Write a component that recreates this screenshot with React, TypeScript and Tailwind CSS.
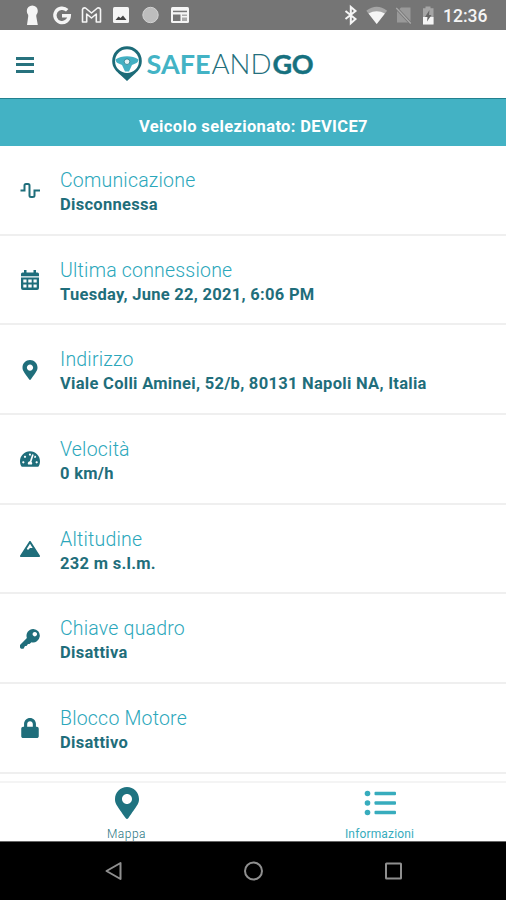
import type { ReactNode } from "react";
import {
    FaLock,
    FaMapMarkerAlt,
    FaMountain,
    FaTachometerAlt,
} from "react-icons/fa";

interface InfoItem {
    title: string;
    value: string;
    icon: ReactNode;
}

const SignalIcon = () => (
    <svg width="21" height="17" viewBox="0 0 21 17" fill="none" stroke="currentColor" strokeWidth="2">
        <path d="M0.500 8.500H4.500V3.500Q4.500 2 6 2H8Q9.500 2 9.500 3.500V13.500Q9.500 15 11 15H12.500Q14.500 15 14.500 13.500V8.500H20" />
    </svg>
);

const CalendarIcon = () => (
    <svg width="18" height="20" viewBox="0 0 18 20" fill="currentColor">
        <path d="M3 0h2.500v2.500h7V0H15v2.500h1.500Q18 2.500 18 4v2.200H0V4q0-1.500 1.500-1.500H3z" />
        <path
            fillRule="evenodd"
            d="M0 7.500h18V18q0 2-2 2H2q-2 0-2-2zM2.300 9.500v3h3.200v-3zm5 0v3h3.400v-3zm5.200 0v3h3.200v-3zM2.300 14.500v3h3.200v-3zm5 0v3h3.400v-3zm5.200 0v3h3.200v-3z"
        />
    </svg>
);

const KeyIcon = () => (
    <svg width="20" height="20" viewBox="0 0 20 20" fill="currentColor">
        <path
            fillRule="evenodd"
            d="M13.300 0a6.700 6.700 0 1 1-1.800 13.200L9.500 15H8L6.500 17H5L3.500 19.800H1L0 18.500V16L6.900 9A6.700 6.700 0 0 1 13.300 0zM14.800 3a2.200 2.200 0 1 0 .01 0z"
        />
    </svg>
);

const ListIcon = () => (
    <svg width="32" height="32" viewBox="0 0 32 32" fill="currentColor">
        <circle cx="3.500" cy="6.500" r="2.800" />
        <circle cx="3.500" cy="16" r="2.800" />
        <circle cx="3.500" cy="25.500" r="2.800" />
        <rect x="10.500" y="4.700" width="21.500" height="3.600" rx="1" />
        <rect x="10.500" y="14.200" width="21.500" height="3.600" rx="1" />
        <rect x="10.500" y="23.700" width="21.500" height="3.600" rx="1" />
    </svg>
);

const items: InfoItem[] = [
    { title: "Comunicazione", value: "Disconnessa", icon: <SignalIcon /> },
    { title: "Ultima connessione", value: "Tuesday, June 22, 2021, 6:06 PM", icon: <CalendarIcon /> },
    { title: "Indirizzo", value: "Viale Colli Aminei, 52/b, 80131 Napoli NA, Italia", icon: <FaMapMarkerAlt size={20} /> },
    { title: "Velocità", value: "0 km/h", icon: <FaTachometerAlt size={20} /> },
    { title: "Altitudine", value: "232 m s.l.m.", icon: <FaMountain size={20} /> },
    { title: "Chiave quadro", value: "Disattiva", icon: <KeyIcon /> },
    { title: "Blocco Motore", value: "Disattivo", icon: <FaLock size={20} /> },
];

function StatusBar() {
    return (
        <div className="flex h-[30px] shrink-0 items-center bg-[#757575] pr-[19px] pl-[26px] text-[#f5f5f5]">
            {/* Notifications */}
            <svg width="166" height="30" viewBox="26 0 166 30" fill="currentColor">
                <path d="M26.800 11a5.500 5.500 0 0 1 11 0q0 2.500-1.500 4v1.500L37.800 25H27l1.200-8.500V15Q26.800 13.500 26.800 11z" />
                <path d="M67.200 10.300A7.200 7.200 0 1 0 69.300 15.700H62" fill="none" stroke="currentColor" strokeWidth="3.400" />
                <path d="M82.500 22V9.500Q83 7.500 85.500 8L91.500 13l6-5q2.500-.5 3 1.500V22h-4.200v-8L91.500 18l-4.800-4v8z" fill="none" stroke="currentColor" strokeWidth="1.600" strokeLinejoin="round" />
                <rect x="113" y="7" width="16" height="16" rx="1.500" />
                <path d="M115.500 20l3-3.500 2 1.500 2.500-2.500 3.500 4.500z" fill="#444" />
                <circle cx="150.500" cy="15" r="7.700" fill="#bdbdbd" stroke="#d2d2d2" />
                <rect x="171" y="7" width="18" height="16" rx="1.500" />
                <path d="M173 10.700h14v1.500h-14z" fill="#777" />
                <path d="M173 14.500h7.500v6.500h-7.500z" fill="#757575" />
                <path d="M182 14.500h5v1.500h-5zM182 17.500h5v3.500h-5z" fill="#aaa" />
            </svg>
            <svg className="ml-auto" width="98" height="30" viewBox="342 0 98 30" fill="currentColor">
                <path d="M345.500 11l10 8-4.700 4.200V7l4.700 4-10 8" fill="none" stroke="currentColor" strokeWidth="2" />
                <path d="M366.300 10.700q10.400-8 20.800 0L376.700 24z" fill="#a5a5a5" />
                <path d="M368.500 13.500q8.200-4.500 16.400 0l-8.200 10.500z" />
                <path d="M401 7.500h9.500V22.500h-13.500V11.500z" fill="#999" />
                <path d="M396.300 8l14.500 15.500" stroke="#757575" strokeWidth="3" />
                <path d="M396.300 8l14.500 15.500" stroke="#aaa" strokeWidth="1.300" />
                <path d="M423 8.200h2.500V6.500h5v1.700h3v16H423z" fill="#a5a5a5" />
                <path d="M423 17h10.500v7.500H423z" />
                <path d="M429.500 10l-4.500 7h2.500l-.5 4.500 4.500-6.500H429z" fill="#666" />
            </svg>
            <span className="ml-[3px] w-[44px] pt-px text-[17.500px] leading-[30px] font-medium whitespace-nowrap">12:36</span>
        </div>
    );
}

function Logo() {
    return (
        <svg width="204" height="38" viewBox="111 45 204 38" aria-label="SafeAndGo">
            <path d="M127 46.200a14.800 14.800 0 0 0-14.800 14.800c0 7 4.500 10.500 8.300 14L127 81l6.500-6c3.800-3.500 8.300-7 8.300-14A14.800 14.800 0 0 0 127 46.200z" fill="#1c6b78" />
            <circle cx="127" cy="61.200" r="11.900" fill="#fff" />
            <path d="M115.500 59.500q5-3.200 11.500-3.200t11.500 3.200q-.5 3-2 3.500l-4.500 2-3 6.500h-4l-3-6.500-4.500-2q-1.500-.5-2-3.500z" fill="#43b0c3" />
            <circle cx="127" cy="61.700" r="2.800" fill="#e4f3f6" stroke="#287b89" strokeWidth="0.800" />
            <g className="font-['Lato',sans-serif]" fontSize="27">
                <text x="146.500" y="74" textLength="64" lengthAdjust="spacing" fontWeight="700" fill="#43b3c5">SAFE</text>
                <text x="211.500" y="74" textLength="60" lengthAdjust="spacingAndGlyphs" fontWeight="300" fill="#246f7c">AND</text>
                <text x="272.500" y="74" textLength="41" lengthAdjust="spacing" fontWeight="700" fill="#16717f" stroke="#16717f" strokeWidth="0.400">GO</text>
            </g>
        </svg>
    );
}

function Header() {
    return (
        <header className="flex h-[69px] shrink-0 items-center border-b border-[#23818f] px-4">
            <div className="mt-px flex w-[18px] flex-col gap-[3.500px]">
                <span className="h-[3px] bg-[#28727e]" />
                <span className="h-[3px] bg-[#28727e]" />
                <span className="h-[3px] bg-[#28727e]" />
            </div>
            <div className="ml-[77px]">
                <Logo />
            </div>
        </header>
    );
}

function InfoRow({ item }: { item: InfoItem }) {
    return (
        <li className="flex h-[89.700px] shrink-0 items-center border-b-2 border-[#efefef]">
            <div className="flex w-[60px] shrink-0 justify-center pt-px text-[#1f6e7b]">{item.icon}</div>
            <div className="pt-[5px] whitespace-nowrap">
                <div className="text-[19.500px] leading-[25px] font-light tracking-[0.200px] text-[#2ba7bb]">{item.title}</div>
                <div className="text-[16.500px] leading-[24px] font-bold tracking-[0.290px] text-[#1f6e7b]">{item.value}</div>
            </div>
        </li>
    );
}

function AndroidNav() {
    return (
        <div className="flex h-[59px] shrink-0 items-center justify-center border-t border-[#666] bg-black">
            <svg width="506" height="58" viewBox="0 842 506 58" fill="none" stroke="#8f8f8f" strokeWidth="2">
                <path d="M120.500 863v16l-14-8z" strokeLinejoin="round" />
                <circle cx="253.500" cy="871" r="8.500" />
                <rect x="386" y="863.500" width="15" height="15" rx="0.500" />
            </svg>
        </div>
    );
}

export default function App() {
    return (
        <div className="flex h-[900px] w-[506px] flex-col overflow-hidden bg-white font-['Roboto',sans-serif]">
            <StatusBar />
            <Header />
            <div className="h-[47px] shrink-0 bg-[#43b2c4] pt-[16px] pl-px text-center text-[16.500px] leading-[24px] font-bold tracking-[0.360px] text-white">
                Veicolo selezionato: DEVICE7
            </div>

            <ul className="flex h-[635px] shrink-0 flex-col overflow-hidden">
                {items.map((item) => (
                    <InfoRow key={item.title} item={item} />
                ))}
            </ul>

            <nav className="grid h-[60px] shrink-0 grid-cols-2 border-t-2 border-[#f4f4f4] text-[12px] leading-[14px]">
                <div className="flex flex-col items-center pt-[4px] text-[#1f7380]">
                    <FaMapMarkerAlt size={32} />
                    <span className="mt-[8px] font-light tracking-[0.500px]">Mappa</span>
                </div>
                <div className="flex flex-col items-center pt-[4px] text-[#37acbd]">
                    <ListIcon />
                    <span className="mt-[8px] tracking-[0.150px]">Informazioni</span>
                </div>
            </nav>
            <AndroidNav />
        </div>
    );
}
